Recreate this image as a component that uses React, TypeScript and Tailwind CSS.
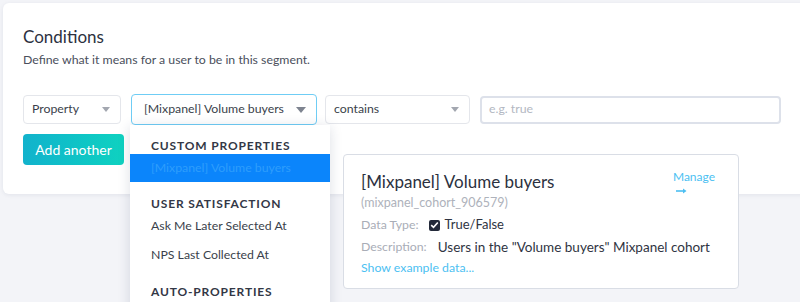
import React from "react";

const Caret = ({ className = "" }: { className?: string }) => (
  <svg width="10" height="6" viewBox="0 0 10 6" className={className}>
    <path d="M0 0 L10 0 L5 6 Z" fill="currentColor" />
  </svg>
);

export default function App() {
  return (
    <div
      className="w-[800px] h-[302px] overflow-hidden bg-[#f3f4f8] pt-[3px] pl-[3px] relative"
      style={{ fontFamily: "Lato, 'Noto Sans', sans-serif" }}
    >
      <div className="bg-white rounded-l-[6px] w-[820px] h-[191px] shadow-[0_1px_4px_rgba(30,40,80,0.08)] pl-[20px] pt-[22px] text-[#2f3442]">
        <h2 className="text-[17px] leading-[24px] text-[#2c3140]">Conditions</h2>
        <p className="text-[12.3px] leading-[18px] text-[#4a4f5c] mt-[2px]">
          Define what it means for a user to be in this segment.
        </p>
        <div className="flex items-center mt-[25px] h-[31px]">
          <div className="w-[98px] h-[29px] border border-[#e4e6eb] rounded-[4px] flex items-center justify-between pl-[8px] pr-[10px] text-[12.3px] text-[#3a3f4b]">
            <span>Property</span>
            <Caret className="text-[#a3a7b0] w-[8px] h-[5px]" />
          </div>
          <div className="relative ml-[10px]">
            <div className="w-[186px] h-[31px] border border-[#6fcdf5] rounded-[4px] flex items-center justify-between pl-[12px] pr-[10px] text-[12.3px] text-[#3a3f4b]">
              <span>[Mixpanel] Volume buyers</span>
              <Caret className="text-[#7e8490]" />
            </div>
            <div className="absolute left-[-1px] top-[31px] w-[200px] h-[200px] bg-white shadow-[0_2px_12px_rgba(30,40,80,0.15)] z-10">
              <div className="pt-[13px] h-[29px] pl-[21px] text-[12px] leading-[16px] font-bold tracking-[0.07em] text-[#333846]">
                CUSTOM PROPERTIES
              </div>
              <div className="h-[28px] bg-[#0b85fb] pl-[21px] flex items-center text-[12.3px] text-[#2e9dfc]">
                [Mixpanel] Volume buyers
              </div>
              <div className="pt-[14px] h-[30px] pl-[21px] text-[12px] leading-[16px] font-bold tracking-[0.07em] text-[#333846]">
                USER SATISFACTION
              </div>
              <div className="h-[29px] pl-[21px] flex items-center text-[12.3px] text-[#3a3f4b]">
                Ask Me Later Selected At
              </div>
              <div className="h-[29px] pl-[21px] flex items-center text-[12.3px] text-[#3a3f4b]">
                NPS Last Collected At
              </div>
              <div className="pt-[14px] h-[30px] pl-[21px] text-[12px] leading-[16px] font-bold tracking-[0.07em] text-[#333846]">
                AUTO-PROPERTIES
              </div>
            </div>
          </div>
          <div className="ml-[8px] w-[145px] h-[29px] border border-[#e4e6eb] rounded-[4px] flex items-center justify-between pl-[8px] pr-[10px] text-[12.3px] text-[#3a3f4b]">
            <span>contains</span>
            <Caret className="text-[#a3a7b0] w-[8px] h-[5px]" />
          </div>
          <div className="ml-[10px] w-[301px] h-[28px] border-2 border-[#dde1ea] rounded-[4px] flex items-center pl-[7px] text-[12.3px] text-[#b3b8c2]">
            e.g. true
          </div>
        </div>
        <button className="mt-[9px] w-[101px] h-[31px] rounded-[4px] bg-gradient-to-r from-[#12b2cc] to-[#0fd2c0] text-white text-[14px]">
          Add another
        </button>
      </div>

      <div className="absolute left-[343px] top-[154px] w-[396px] h-[135px] bg-white border border-[#d9dde5] rounded-[4px] pl-[17px] pt-[14px] flex flex-col text-[#2f3442]">
        <div className="flex justify-between">
          <div className="text-[17px] leading-[26px] text-[#2c3140]">[Mixpanel] Volume buyers</div>
          <div className="mr-[23px] flex flex-col items-start text-[12px] leading-[14px] text-[#4cbff2] mt-[1px]">
            <span>Manage</span>
            <span className="ml-[3px] mt-[4px]">
              <svg width="11" height="6" viewBox="0 0 11 6">
                <path d="M0 3 H8" stroke="currentColor" strokeWidth="1.6" />
                <path d="M7 0.5 L10.5 3 L7 5.5 Z" fill="currentColor" />
              </svg>
            </span>
          </div>
        </div>
        <div className="text-[12.5px] leading-[18px] text-[#aeb2bb] -mt-[1px]">(mixpanel_cohort_906579)</div>
        <div className="flex items-center mt-[4px] h-[18px] text-[12.3px]">
          <span className="text-[#a9adb7]">Data Type:</span>
          <span className="ml-[10px] w-[11px] h-[11px] bg-[#232a3a] rounded-[2px] flex items-center justify-center">
            <svg width="9" height="8" viewBox="0 0 9 8">
              <path d="M1.2 4.2 L3.5 6.3 L7.8 1.5" stroke="white" strokeWidth="1.6" fill="none" />
            </svg>
          </span>
          <span className="ml-[5px] text-[13px] text-[#2f3442]">True/False</span>
        </div>
        <div className="flex items-center mt-[4px] h-[18px] text-[12.3px]">
          <span className="text-[#a9adb7]">Description:</span>
          <span className="ml-[11px] text-[13.5px] text-[#2f3442]">Users in the "Volume buyers" Mixpanel cohort</span>
        </div>
        <div className="mt-[3px] h-[18px] flex items-center text-[12.3px] text-[#4cbff2]">Show example data...</div>
      </div>
    </div>
  );
}
